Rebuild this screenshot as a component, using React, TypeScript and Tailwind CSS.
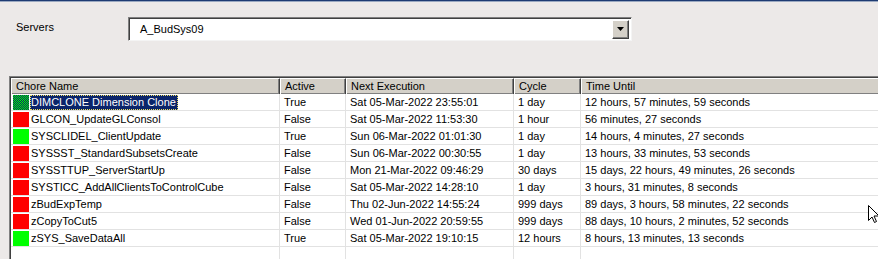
import React from 'react'

type Chore = {
  name: string
  active: boolean
  next: string
  cycle: string
  until: string
}

const chores: Chore[] = [
  { name: 'DIMCLONE Dimension Clone', active: true, next: 'Sat 05-Mar-2022 23:55:01', cycle: '1 day', until: '12 hours, 57 minutes, 59 seconds' },
  { name: 'GLCON_UpdateGLConsol', active: false, next: 'Sat 05-Mar-2022 11:53:30', cycle: '1 hour', until: '56 minutes, 27 seconds' },
  { name: 'SYSCLIDEL_ClientUpdate', active: true, next: 'Sun 06-Mar-2022 01:01:30', cycle: '1 day', until: '14 hours, 4 minutes, 27 seconds' },
  { name: 'SYSSST_StandardSubsetsCreate', active: false, next: 'Sun 06-Mar-2022 00:30:55', cycle: '1 day', until: '13 hours, 33 minutes, 53 seconds' },
  { name: 'SYSSTTUP_ServerStartUp', active: false, next: 'Mon 21-Mar-2022 09:46:29', cycle: '30 days', until: '15 days, 22 hours, 49 minutes, 26 seconds' },
  { name: 'SYSTICC_AddAllClientsToControlCube', active: false, next: 'Sat 05-Mar-2022 14:28:10', cycle: '1 day', until: '3 hours, 31 minutes, 8 seconds' },
  { name: 'zBudExpTemp', active: false, next: 'Thu 02-Jun-2022 14:55:24', cycle: '999 days', until: '89 days, 3 hours, 58 minutes, 22 seconds' },
  { name: 'zCopyToCut5', active: false, next: 'Wed 01-Jun-2022 20:59:55', cycle: '999 days', until: '88 days, 10 hours, 2 minutes, 52 seconds' },
  { name: 'zSYS_SaveDataAll', active: true, next: 'Sat 05-Mar-2022 19:10:15', cycle: '12 hours', until: '8 hours, 13 minutes, 13 seconds' },
]

function HeaderCell({ label, w }: { label: string; w: string }) {
  return (
    <div className={`${w} h-[16px] shrink-0 bg-[#d4d0c8] border-t border-l border-white border-r border-r-[#404040] shadow-[inset_-1px_-1px_0_#808080] pl-[4px] leading-[15px]`}>
      {label}
    </div>
  )
}

// selected-row status square: green dithered with the highlight colour
function SelectedIcon() {
  return (
    <svg width="16" height="15" viewBox="0 0 16 15" shapeRendering="crispEdges">
      <defs>
        <pattern id="dither" width="2" height="2" patternUnits="userSpaceOnUse">
          <rect width="2" height="2" fill="#0a246a" />
          <rect width="1" height="1" fill="#00ff00" />
          <rect x="1" y="1" width="1" height="1" fill="#00ff00" />
        </pattern>
      </defs>
      <rect width="16" height="15" fill="url(#dither)" />
    </svg>
  )
}

export default function App() {
  return (
    <div className="relative w-[878px] h-[259px] overflow-hidden bg-[#ece9e8] text-[11px] text-black" style={{ fontFamily: '"Liberation Sans", Arial, sans-serif' }}>
      <div className="h-[1px] bg-[#1e3b72]" />
      <div className="h-[1px] bg-[#9aa8c0]" />

      {/* Servers selector */}
      <div className="flex items-start pt-[15px] pl-[16px]">
        <span className="w-[112px] pt-[2px]">Servers</span>
        <div className="flex items-center w-[504px] h-[24px] bg-white border border-t-[#808080] border-l-[#808080] border-b-[#f4f4f4] border-r-[#f4f4f4] shadow-[inset_1px_1px_0_#404040]">
          <span className="flex-1 pl-[11px] pt-[1px]">A_BudSys09</span>
          <div className="mr-[2px] w-[17px] h-[19px] bg-[#d4d0c8] border border-t-white border-l-white border-r-[#404040] border-b-[#404040] shadow-[inset_-1px_-1px_0_#808080] flex items-center justify-center">
            <svg width="7" height="4" viewBox="0 0 7 4"><path d="M0 0h7L3.5 4z" fill="#000" /></svg>
          </div>
        </div>
      </div>

      {/* Chores list */}
      <div className="ml-[9px] mt-[35px] w-[900px] h-[200px] bg-white border-t border-l border-[#808080] shadow-[inset_1px_1px_0_#404040] pt-[1px] pl-[1px]">
        <div className="flex">
          <HeaderCell label="Chore Name" w="w-[269px]" />
          <HeaderCell label="Active" w="w-[66px]" />
          <HeaderCell label="Next Execution" w="w-[168px]" />
          <HeaderCell label="Cycle" w="w-[67px]" />
          <HeaderCell label="Time Until" w="w-[400px]" />
        </div>
        {chores.map((c, i) => (
          <div key={c.name} className="flex h-[17px] border-b border-[#e2e2e2] leading-[16px]">
            <div className="w-[269px] shrink-0 flex items-center border-r border-[#e2e2e2] pl-[2px]">
              {i === 0 ? (
                <SelectedIcon />
              ) : (
                <span className={`w-[16px] h-[15px] ${c.active ? 'bg-[#00ff00]' : 'bg-[#ff0000]'}`} />
              )}
              {i === 0 ? (
                <span className="ml-[1px] pl-[1px] pr-[2px] h-[15px] leading-[14px] bg-[#0a246a] text-white outline-1 outline-dotted outline-[#f0e060] -outline-offset-1">
                  {c.name}
                </span>
              ) : (
                <span className="ml-[2px]">{c.name}</span>
              )}
            </div>
            <div className="w-[66px] shrink-0 border-r border-[#e2e2e2] pl-[4px]">{c.active ? 'True' : 'False'}</div>
            <div className="w-[168px] shrink-0 border-r border-[#e2e2e2] pl-[4px]">{c.next}</div>
            <div className="w-[67px] shrink-0 border-r border-[#e2e2e2] pl-[4px]">{c.cycle}</div>
            <div className="flex-1 pl-[4px]">{c.until}</div>
          </div>
        ))}
        <div className="flex h-[20px]">
          <div className="w-[269px] shrink-0 border-r border-[#e2e2e2]" />
          <div className="w-[66px] shrink-0 border-r border-[#e2e2e2]" />
          <div className="w-[168px] shrink-0 border-r border-[#e2e2e2]" />
          <div className="w-[67px] shrink-0 border-r border-[#e2e2e2]" />
        </div>
      </div>

      {/* mouse pointer */}
      <svg className="absolute left-[868px] top-[205px]" width="12" height="19" viewBox="0 0 12 19">
        <path d="M0.5 0.5V15.5L4 12L6.5 17.5L8.5 16.5L6 11H11Z" fill="#fff" stroke="#000" strokeWidth="1" />
      </svg>
    </div>
  )
}
